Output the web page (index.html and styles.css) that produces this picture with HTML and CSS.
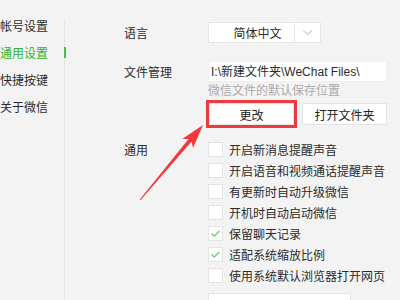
FILE: index.html
```html
<!DOCTYPE html>
<html lang="zh-CN">
<head>
	<title>设置</title>
	<meta charset="UTF-8">
	<link rel="stylesheet" href="styles.css">
</head>
<body>
	<div class="app">
		<div class="sidebar">
			<div class="nav-item">帐号设置</div>
			<div class="nav-item active">通用设置</div>
			<div class="nav-item">快捷按键</div>
			<div class="nav-item">关于微信</div>
		</div>
		<div class="divider"></div>

		<div class="content">
			<div class="setting-row first">
				<div class="setting-label">语言</div>
				<div class="setting-body">
					<div class="select">
						<div class="select-text">简体中文</div>
						<div class="select-arrow">
							<svg viewBox="0 0 12 8" width="11" height="7">
								<polyline points="1,1.5 6,6 11,1.5" fill="none" stroke="#c8c8c8" stroke-width="1.2"/>
							</svg>
						</div>
					</div>
				</div>
			</div>

			<div class="setting-row files">
				<div class="setting-label">文件管理</div>
				<div class="setting-body">
					<div class="path-box">I:\新建文件夹\WeChat Files\</div>
					<div class="hint">微信文件的默认保存位置</div>
					<div class="btn-row">
						<button class="btn highlighted">更改</button>
						<button class="btn">打开文件夹</button>
					</div>
				</div>
			</div>

			<div class="setting-row general">
				<div class="setting-label">通用</div>
				<div class="setting-body">
					<div class="check-row"><span class="checkbox"></span>开启新消息提醒声音</div>
					<div class="check-row"><span class="checkbox"></span>开启语音和视频通话提醒声音</div>
					<div class="check-row"><span class="checkbox"></span>有更新时自动升级微信</div>
					<div class="check-row"><span class="checkbox"></span>开机时自动启动微信</div>
					<div class="check-row">
						<span class="checkbox">
							<svg viewBox="0 0 15 15" width="13" height="13"><polyline points="3,7.5 6,10.5 12,4.5" fill="none" stroke="#5cc65c" stroke-width="1.3"/></svg>
						</span>保留聊天记录
					</div>
					<div class="check-row">
						<span class="checkbox">
							<svg viewBox="0 0 15 15" width="13" height="13"><polyline points="3,7.5 6,10.5 12,4.5" fill="none" stroke="#5cc65c" stroke-width="1.3"/></svg>
						</span>适配系统缩放比例
					</div>
					<div class="check-row"><span class="checkbox"></span>使用系统默认浏览器打开网页</div>
					<div class="more-box"></div>
				</div>
			</div>
		</div>

		<!-- annotation arrow pointing at the button -->
		<svg class="arrow" viewBox="0 0 400 300" width="400" height="300">
			<polygon fill="#f2393a" points="139.6,199.7 188.6,139.0 182.2,138.9 203,125 193.0,147.9 191.6,141.6 140.4,200.3"/>
		</svg>
	</div>
</body>
</html>
```

FILE: styles.css
```css
body {
	margin: 0;
	background: #f3f3f3;
	font-family: "Noto Sans CJK SC", "Liberation Sans", sans-serif;
	font-size: 12px;
	color: #2b2b2b;
}

.app {
	position: relative;
	display: flex;
	width: 400px;
	height: 300px;
	overflow: hidden;
}

.sidebar {
	width: 64px;
	padding-top: 12px;
}

.nav-item {
	position: relative;
	height: 27px;
	line-height: 27px;
	white-space: nowrap;
}

.nav-item.active {
	color: #2db52d;
}

.nav-item.active::after {
	content: "";
	position: absolute;
	right: -2px;
	top: 8px;
	width: 2px;
	height: 11px;
	background: #3fc43f;
}

.divider {
	width: 1px;
	margin-top: 21px;
	background: #e2e2e2;
}

.content {
	flex: 1;
	padding-left: 59px;
}

.setting-row {
	display: flex;
}

.setting-row.first {
	margin-top: 22px;
}

.setting-row.files {
	margin-top: 18px;
}

.setting-row.general {
	margin-top: 14px;
}

.setting-label {
	width: 84px;
	line-height: 21px;
	flex-shrink: 0;
}

.setting-body {
	flex: 1;
}

.select {
	display: flex;
	width: 113px;
	height: 21px;
	box-sizing: border-box;
	background: white;
	border: 1px solid #e6e6e6;
}

.select-text {
	flex: 1;
	line-height: 19px;
	padding-left: 12px;
	text-align: center;
}

.select-arrow {
	width: 25px;
	border-left: 1px solid #e6e6e6;
	display: flex;
	align-items: center;
	justify-content: center;
}

svg {
	display: block;
}

.path-box {
	width: 179px;
	height: 21px;
	box-sizing: border-box;
	padding-left: 2px;
	line-height: 20px;
	background: white;
	border: 1px solid #efefef;
	white-space: nowrap;
	font-family: "Liberation Sans", "Noto Sans CJK SC", sans-serif;
}

.hint {
	line-height: 16px;
	color: #ababab;
}

.btn-row {
	display: flex;
	gap: 8px;
	margin-top: 5px;
	padding-left: 1px;
}

.btn {
	width: 85px;
	height: 22px;
	padding: 0;
	background: white;
	border: 1px solid #e4e4e4;
	font-family: inherit;
	font-size: 12px;
	color: #222;
}

.btn.highlighted {
	outline: 3px solid #ec3b3e;
	outline-offset: 0;
}

.check-row {
	display: flex;
	align-items: center;
	height: 21px;
	white-space: nowrap;
}

.checkbox {
	width: 15px;
	height: 15px;
	box-sizing: border-box;
	margin-right: 6px;
	background: white;
	border: 1px solid #e3e3e3;
	display: flex;
	align-items: center;
	justify-content: center;
}

.more-box {
	width: 141px;
	height: 22px;
	margin-top: 7px;
	background: white;
	border: 1px solid #e6e6e6;
}

.arrow {
	position: absolute;
	left: 0;
	top: 0;
	pointer-events: none;
}
```
